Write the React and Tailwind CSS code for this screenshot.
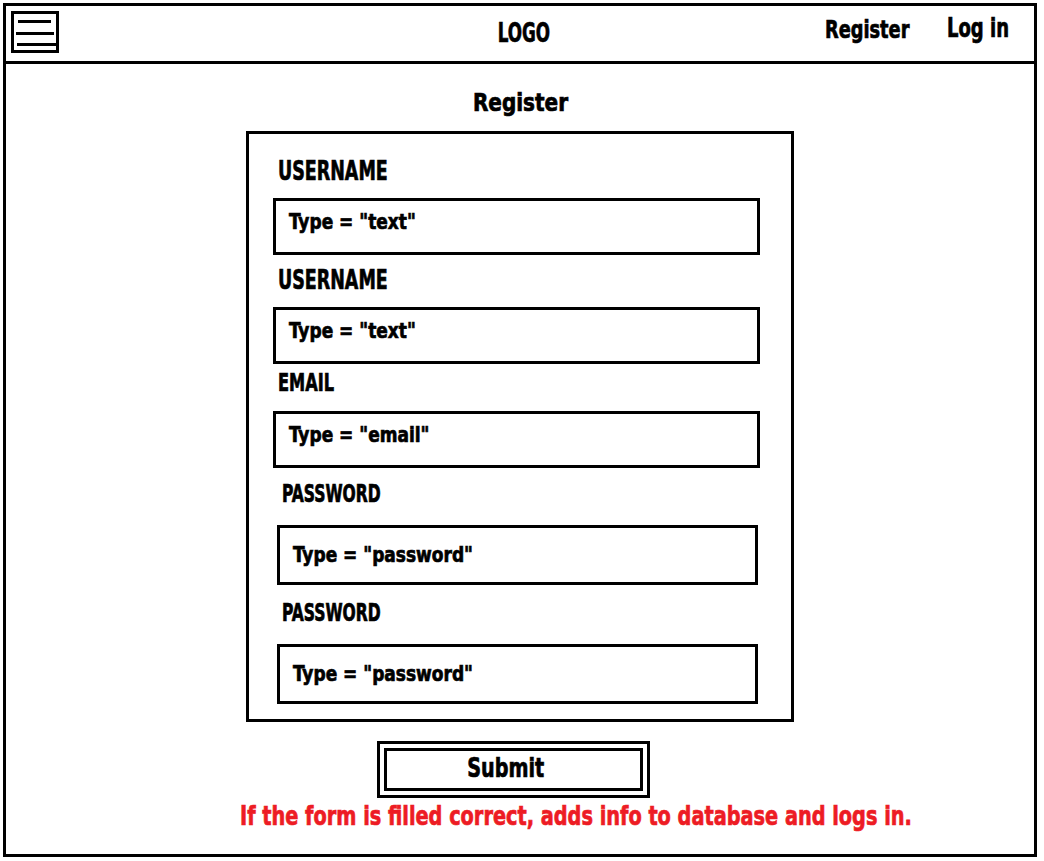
import React from 'react';

// Impact-like look: DejaVu Sans Condensed Bold squeezed horizontally
const Txt = ({ children, className = '' }) => (
  <span className={`inline-block whitespace-nowrap [-webkit-text-stroke:0.7px_currentcolor] ${className}`}>
    {children}
  </span>
);

const fields = [
  { label: 'USERNAME', type: 'text', labelClass: 'text-[27px] mt-[23px] ml-[29px]', boxClass: 'mt-[14px] ml-[24px] w-[487px] h-[57px] pb-[10px]' },
  { label: 'USERNAME', type: 'text', labelClass: 'text-[27px] mt-[11px] ml-[29px]', boxClass: 'mt-[14px] ml-[24px] w-[487px] h-[57px] pb-[10px]' },
  { label: 'EMAIL', type: 'email', labelClass: 'text-[25px] mt-[6px] ml-[29px]', boxClass: 'mt-[16px] ml-[24px] w-[487px] h-[57px] pb-[10px]' },
  { label: 'PASSWORD', type: 'password', labelClass: 'text-[24px] mt-[14px] ml-[33px]', boxClass: 'mt-[19px] ml-[28px] w-[481px] h-[60px] pl-[12px]' },
  { label: 'PASSWORD', type: 'password', labelClass: 'text-[24px] mt-[16px] ml-[33px]', boxClass: 'mt-[19px] ml-[28px] w-[481px] h-[60px] pl-[12px]' },
];

const MenuIcon = () => (
  <div className="w-[48px] h-[42px] border-[3px] border-black relative">
    <div className="absolute left-[4px] top-[6px] w-[33px] h-[3px] bg-black" />
    <div className="absolute left-[2px] top-[18px] w-[38px] h-[3px] bg-black" />
    <div className="absolute left-[3px] top-[29px] w-[39px] h-[3px] bg-black" />
  </div>
);

const Field = ({ label, type, labelClass, boxClass }) => (
  <>
    <div className={`${labelClass} leading-none`}>
      <Txt className="scale-x-[0.72] origin-left">{label}</Txt>
    </div>
    <div className={`${boxClass} border-[3px] border-black flex items-center pl-[13px] text-[22px] leading-none`}>
      <Txt className="scale-x-[0.86] origin-left">Type = "{type}"</Txt>
    </div>
  </>
);

export default function App() {
  return (
    <div className="bg-white w-[1044px] h-[861px] pt-[3px] pl-[3px] font-['DejaVu_Sans_Condensed','DejaVu_Sans',sans-serif] font-bold text-black">
      <div className="w-[1034px] h-[854px] border-[3px] border-black flex flex-col">
        {/* top bar */}
        <header className="h-[58px] shrink-0 border-b-[3px] border-black flex items-start px-[5px]">
          <div className="flex-1 flex mt-[5px]">
            <MenuIcon />
          </div>
          <div className="text-[27px] leading-none ml-[28px] mt-[13px]">
            <Txt className="scale-x-[0.69]">LOGO</Txt>
          </div>
          <div className="flex-1 flex justify-end items-start gap-[40px] pr-[21px]">
            <div className="w-[82px] shrink-0 mt-[11px] text-[25px] leading-none">
              <Txt className="scale-x-[0.79] origin-left">Register</Txt>
            </div>
            <div className="w-[61px] shrink-0 mt-[9px] text-[26px] leading-none">
              <Txt className="scale-x-[0.77] origin-left">Log in</Txt>
            </div>
          </div>
        </header>

        <main className="flex flex-col">
          <h1 className="text-center text-[25px] leading-none mt-[26px]">
            <Txt className="scale-x-[0.89]">Register</Txt>
          </h1>

          <div className="mx-auto mt-[16px] w-[548px] h-[591px] border-[3px] border-black flex flex-col">
            {fields.map((f, i) => (
              <Field key={i} {...f} />
            ))}
          </div>

          <div className="ml-[371px] mt-[19px] w-[273px] h-[57px] border-[3px] border-black p-[4px]">
            <div className="h-full border-[3px] border-black flex items-center justify-center text-[27px] leading-none pr-[16px] pb-[4px]">
              <Txt className="scale-x-[0.79]">Submit</Txt>
            </div>
          </div>

          <p className="ml-[234px] mt-[4px] text-[27px] leading-none text-[#ed1c24]">
            <Txt className="scale-x-[0.795] origin-left">
              If the form is filled correct, adds info to database and logs in.
            </Txt>
          </p>
        </main>
      </div>
    </div>
  );
}
